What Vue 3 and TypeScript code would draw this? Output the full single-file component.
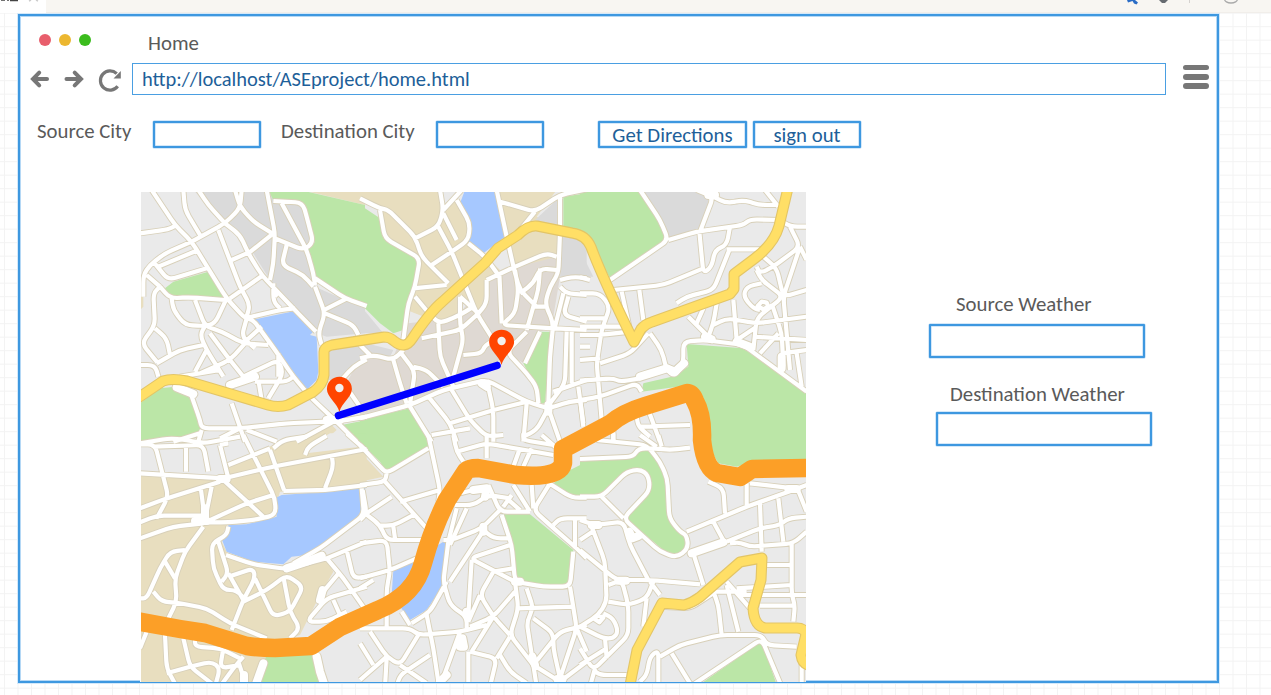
<script setup lang="ts">
interface Area { fill: string; d: string }
interface Tile { x: number; y: number; areas: Area[]; roads: string; wide?: string }

const DARK = '#dadada'
const PALE = '#eaeaea'
const SAND = '#e8debf'
const TAUPE = '#dfd9d3'
const PARK = '#bbe6a7'
const WATER = '#a6c8ff'

// Each tile is drawn in units of a third of a pixel.
const tiles: Tile[] = [
  {
    x: 140, y: 190,
    areas: [
      { fill: DARK, d: 'M160,0H385L405,30L485,35L525,155L495,185L525,290L615,330L675,345V430L560,440L530,430L390,270L340,190L255,100Z M565,480L675,450V510L640,530L600,570H565Z' },
      { fill: TAUPE, d: 'M680,515L640,540L615,590L680,650Z' },
      { fill: SAND, d: 'M485,0H675V45Z M0,250L10,260V350L0,360Z M480,760L530,715L575,705L590,720L545,760Z' },
      { fill: PARK, d: 'M385,0H480L675,45V345L615,325L525,270L520,230L500,185L525,155L500,100L490,40L400,30Z M75,295L100,275L205,245L260,325L105,318L92,328Z M0,640L60,595L105,590L150,620L180,690V730L50,755H0Z M605,705L680,690V755H650Z' },
      { fill: WATER, d: 'M335,390L465,363L525,420L510,435L530,440L535,545L530,570L500,600L405,470L385,460Z' },
    ],
    roads: 'M35,0L105,105L155,155L260,325L315,385L340,390L405,480L460,560L515,625L600,705L650,755 M0,130L85,118L105,108 M130,0L135,60L180,135 M175,0L205,45L255,100 M155,155L255,100L300,55L305,0 M285,0L300,50L340,95L400,132 M255,100L300,135L325,190L365,255L460,355L528,425 M325,190L400,130 M380,0L405,130L400,220L390,270 M405,145L490,180L520,158L500,80L488,38L400,33 M425,40L500,180L520,250L525,285 M440,165L425,225L490,255L520,290 M525,265L615,325L680,348 M552,360L615,328 M525,290L555,370L535,430L545,465 M555,370L640,405L655,435 M235,120L300,290L330,345L320,380 M275,210L325,188 M270,325L370,255 M315,385L420,360L465,355 M400,280V335L420,355 M415,305L405,320 M155,155L75,190L30,225L10,255V320 M20,255L60,290 M40,215L85,270L200,235 M55,230L175,180 M60,290L40,310L45,405L5,460L50,515 M60,290L90,325L150,322L255,330 M95,325L100,360L135,405L195,408L225,400L260,325 M165,330L195,408L245,425L310,460L385,465 M195,408L180,435L200,480L250,560 M210,430L270,510L310,560 M315,460L270,510L180,550 M320,385L305,440L345,475 M310,460L365,410 M200,480L165,545 M45,415L80,445L90,495 M50,520L120,480L190,465 M0,525H45L55,560 M310,560L415,510L430,550L385,625 M345,575L440,575L460,560 M355,570L365,630 M415,490V560 M120,560L240,540 M150,605L180,690L185,715L300,715L440,700L600,693L680,680 M275,640L315,755 M185,720L175,755 M300,715L240,745 M100,755L180,730 M320,720L410,755 M600,575L640,530L680,508 M625,600L660,650 M470,755L590,690',
    wide: 'M270,585L345,560 M560,690H600 M110,592L160,612',
  },
  {
    x: 360, y: 190,
    areas: [
      { fill: TAUPE, d: 'M145,400L230,390L300,370L370,280L460,230L590,190L600,260L575,410L530,430L490,520L460,500L340,540L250,600L150,640L0,690V510L100,500L130,430Z' },
      { fill: SAND, d: 'M0,0H240L255,40L290,15L305,50L335,110L330,155L420,240L380,280L365,345L350,370L300,320V370L230,395L140,360L165,290L180,210L75,145L60,50L0,40Z M415,0H590L530,80L600,120L590,200L455,235L430,140Z' },
      { fill: DARK, d: 'M525,90L600,20V120Z M605,120L680,160V260H600Z M0,345L70,430H0Z M0,455L100,480L85,510L0,500Z' },
      { fill: PARK, d: 'M0,45L60,85L75,145L180,205L130,420L100,430L60,400L0,340Z M610,20L680,10V140L610,110Z M530,425H572L555,640H535L530,600L490,520Z M0,690L150,655L205,740V755H0Z' },
      { fill: WATER, d: 'M315,0H410L435,140L370,190L325,155L335,110L300,40Z' },
      { fill: PALE, d: 'M440,490L530,590V630L385,570L390,535Z' },
    ],
    roads: 'M0,25L60,55L85,60L165,140L185,200L265,280 M60,60L75,145L180,205L165,290L145,340L130,450 M165,145L235,110L250,60L240,0 M250,60L305,0 M290,30L330,100L325,150L275,185L215,225 M235,110L275,185L350,370L400,450 M250,70L290,150 M325,160L375,200L415,255 M160,295L260,285 M165,320L215,380L240,400L300,375L340,350 M235,400L240,500L280,590 M185,445L300,420L350,375 M300,320V400L310,450L280,560 M300,320L355,370 M410,0L440,140L465,250L480,300L530,350 M420,35L525,65L600,15L680,-2 M525,65L480,120 M600,15V130L595,250L570,290L555,340L580,400L570,500L565,640 M380,270L465,230L560,190L590,200 M380,270V340L355,370 M418,250L425,400 M465,240L475,300L465,370L425,405L580,415L680,420 M480,310L520,280L540,235L590,240 M540,235L535,300L520,350L500,420 M520,350H555 M600,270L640,260L680,265 M600,290L620,310L680,315 M625,320L610,375L680,395 M610,310L585,410 M500,425L440,485L500,550L530,590L535,640 M540,425L495,520 M310,495L365,490L375,465L430,440 M120,485L165,545L150,640 M100,510L120,580L140,640 M0,505L40,495L100,510L130,480 M0,465L30,495 M160,530L200,540L250,590 M0,685L150,645L250,600L380,570L500,635L565,655L630,635L680,630 M150,650L215,755 M205,620L270,700L290,755 M275,600L330,690L380,740L430,735 M270,700L400,660L500,635 M215,735L330,715 M380,570L400,660V755 M500,640L490,755 M565,655L530,720L490,740 M565,655L600,755 M620,425L615,580L570,640 M635,425V580 M680,570L580,605 M655,590L670,700',
    wide: 'M365,580L380,590 M565,645V665',
  },
  {
    x: 580, y: 190,
    areas: [
      { fill: DARK, d: 'M185,0H385V60L360,120L270,145Z M0,180L40,260H0Z' },
      { fill: PARK, d: 'M0,0H180L265,150L90,265L40,170L0,130Z M320,462L490,475L680,610V755H390L360,620L330,585L185,605L190,580L275,560L325,530Z' },
    ],
    roads: 'M180,0L240,90L265,150L90,270 M0,262L30,270 M265,150L350,125L490,105L510,88L600,90 M350,0L400,20L360,125 M400,20L440,40L490,30L540,45L590,45 M555,0L595,50 M358,125L370,250L395,230L405,180L440,165L450,110 M450,175L400,300L320,320L290,340 M440,178H545 M100,300L250,285L370,235 M125,305L150,420 M178,300L190,390 M0,310H60L90,350L65,420L50,520L65,690 M0,385H80 M0,410H130 M0,435H60L150,425 M0,510L60,505 M60,520L150,490L205,430 M210,430L245,480L260,540L285,560L310,520V455L375,450L490,465L680,605 M0,572L100,565L120,575L180,565 M0,630L60,620L170,580L185,605 M0,625L10,710 M170,680L175,710L210,740 M205,660L240,755 M175,710L330,705 M325,380L385,440 M350,400L370,355 M410,340L400,400L385,440 M400,405L440,385L530,400L680,380 M460,330L470,450 M600,90L630,110H680 M630,110L660,170L580,230L540,250L530,230 M660,170L610,320L630,540 M660,170L680,210 M550,200L590,235L610,320L680,300 M530,240L545,270L610,320L530,385L520,480 M545,280L500,290L490,320L520,355L540,360 M533,348L545,335L560,338L565,350L550,358Z M575,340L605,430L610,530 M470,450L530,410 M520,440L680,450 M605,490L680,480 M650,490L665,590 M540,490L595,430 M0,470H30 M100,720V755',
    wide: 'M180,560L260,535L285,545L312,520 M375,440L395,448 M470,455L510,470 M605,500V535 M385,15H405',
  },
  {
    x: 140, y: 435,
    areas: [
      { fill: SAND, d: 'M0,110L250,130L265,90L330,60L400,30L500,0H640L680,40V155L420,170L400,240L265,265L240,310L265,360L340,390L460,400L560,375L580,410L540,480L480,600L360,640L380,670L345,755H0Z' },
      { fill: PALE, d: 'M500,55L510,30L570,-5H640L660,35Z' },
      { fill: PARK, d: 'M0,0H125L60,12L0,20Z M625,-5H680V45Z M380,660L515,655L545,755H345Z' },
      { fill: WATER, d: 'M405,190L425,180L560,170L680,155L660,180L672,235L500,360L455,365L430,388L340,380L260,350L245,312L265,295V270L320,268L410,245Z' },
    ],
    roads: 'M0,28H45L85,185L50,250 M0,25L90,10L140,15L190,25L300,5 M40,35L190,30L205,110 M138,35V110 M240,30L265,130 M0,115L250,130L400,95L680,42 M310,0L360,100L405,190L407,240L340,255L265,262H190 M240,30L265,25 M265,90L390,40 M390,45L432,165 M400,40L430,15L500,5 M495,60L505,35L560,2 M575,60L580,95L555,160 M620,-5L680,48 M430,168L555,165L680,150 M0,220L80,190L240,140 M0,262L50,242H190 M183,165L195,255L215,155 M190,265L100,275L0,310 M200,260L320,205L400,180 M250,135L370,245 M190,275L135,350L105,430L110,500L85,550 M135,345L90,350L60,400L20,490H0 M75,380L105,430 M40,470L65,500L110,503L200,520L270,565L380,610 M265,275L260,300L215,325L220,400L250,465H290L320,500 M235,320L265,415L245,440 M258,360L340,388L440,402L560,370 M265,415L310,495 M265,425L340,400L345,430L310,495L275,585 M345,430L400,545L450,530L490,455L440,420L380,465L310,500 M430,425L450,530L480,580L450,610 M665,160L672,240L540,340L460,385 M560,370L620,345L680,320 M560,370L610,430L680,530 M620,345L640,430L680,425 M680,455L560,490L500,560H560L620,530 M600,410L550,470 M580,495L600,540 M0,640L20,590 M75,600L80,700L110,755 M80,715L150,695L215,680L240,700L225,755 M130,610L150,695L215,745 M165,610V635L240,640L300,670 M250,640L240,700L300,690 M310,665L280,700L240,755 M295,680L320,755',
    wide: 'M165,258H200 M195,220V255 M240,132H260 M548,465L540,495 M440,400L500,380L545,362 M370,685L345,755 M530,665L540,710L555,755 M312,720V755',
  },
  {
    x: 360, y: 435,
    areas: [
      { fill: SAND, d: 'M0,50L70,125L0,140Z' },
      { fill: PARK, d: 'M0,0H205L208,35L80,112L60,80L0,20Z M428,238H510L640,345L628,445L560,452L500,445L468,420L455,320Z M575,150L620,110L680,80V180L635,182Z' },
      { fill: WATER, d: 'M0,155L15,160V235L0,245Z M100,405L170,370L250,320L262,325L245,430L250,450L200,525L150,555L95,480Z' },
    ],
    roads: 'M0,30L60,95L80,115L205,40 M205,0L240,165L235,200 M80,115L75,140L0,150 M75,140L200,280 M15,235L60,270L80,315L200,315 M20,235L95,185 M120,200L240,165 M55,272H100L160,240 M100,275L105,310 M0,325L80,315L90,410L80,460V580 M0,430L90,405L170,370 M0,460L40,435 M8,165L20,235L0,255 M280,0L290,50L310,80 M290,50L380,25L580,60 M380,0V70 M460,95L480,40 M490,95L515,40 M490,-5V15L580,30 M545,0L585,35 M300,175L340,165 M285,210H340L385,180L450,190 M290,220L265,320 M320,220L270,330 M250,315H275L365,280L420,225 M375,280L270,440 M370,285L400,310L445,310 M385,150L420,230H510 M460,150L510,230 M455,180L430,215 M440,190L480,225 M515,150L520,220 M570,145L520,225L570,270L650,340L680,370 M580,270L600,250H680 M645,250V340 M560,140L635,188H680 M425,240L455,330L465,440L550,455H630L640,350 M630,455L650,580L600,730 M465,440L330,370L450,330 M335,375L325,540 M265,320L250,440L270,510L320,545L320,580 M400,410L360,480L400,545L450,600 M400,410L460,400 M325,560L360,480 M330,575L400,545L465,470 M465,440L475,520L450,600L520,690 M475,520L640,515 M500,460L520,520L500,560L520,690L600,590L680,570 M520,550L580,595V640L600,730 M650,580L680,650 M0,580H150L175,600L300,590L380,570 M125,530L150,570 M260,440L210,530L155,565 M200,540L220,640L235,740 M300,590L240,755 M175,600L120,690L80,665L30,590 M80,665L0,735 M0,625L40,690 M80,670L75,755 M120,690L200,745 M210,660L120,720L110,755 M325,650V755 M330,650L410,670L390,755 M400,545L335,650 M410,670L450,605 M420,660L450,710L500,745 M520,690L530,755 M520,690L600,740L680,680',
    wide: 'M340,165L380,160L375,185 M305,610L300,635H312L307,610 M517,665L525,690 M240,740L260,720 M320,530V540 M592,732H608 M370,275V290 M465,440H480',
  },
  {
    x: 580, y: 435,
    areas: [
      { fill: PARK, d: 'M0,80L165,65L175,42H210L240,80L260,110L265,250L315,300V340L290,360L250,345L135,248L210,170L205,125L190,103H150L60,182H0Z M390,0H680V75H540L470,95L415,85L395,50Z M350,755L545,618L592,755Z' },
    ],
    roads: 'M0,72L160,65L175,40H225L270,45L330,38 M50,15L200,30L240,80L262,130L268,250L300,290L320,300L325,340L290,368L240,350L130,250L210,165L205,120L180,103L140,110L65,185H0 M65,185L130,250 M180,0L230,35 M235,0L245,35 M100,-5V20 M0,255L45,270L130,260L150,330L205,435 M35,275L75,380L80,500L55,540L0,575 M0,345L110,435H210L360,448 M0,315L45,285 M85,450L125,435L145,510V600L40,705L0,640 M85,500L145,510L200,490L220,440 M210,440L240,480 M200,490L190,575 M70,535L100,550L115,590L100,610H70L0,575 M40,550L55,542L70,548L58,562Z M75,610L80,670 M0,690L80,640 M40,705L60,720H140 M30,755L45,700 M180,740L200,720L210,665L235,645V755 M320,290L500,215L640,165L680,150 M385,140L430,160L435,235 M500,145V210 M510,145L640,160 M400,260L435,325 M440,320L540,280L600,270L625,250L680,245 M450,325L480,322L510,335L640,325L680,290 M540,205L545,350 M595,190L610,320 M650,155L680,230 M635,320V480L645,510L640,560 M560,390H635 M470,460L635,450 M400,470H500 M480,480H680 M540,512H640 M340,355L370,450 M400,470L415,510L425,600 M440,450L475,590 M440,440L510,520 M240,665L300,630L420,600H545L560,630L650,635 M275,655L330,745 M330,755L545,612L605,755 M665,640V755 M245,515L330,520L400,475',
    wide: 'M335,355L430,322 M148,290L157,310L175,303 M35,270H55 M625,162H650 M115,437H138',
  },
]

// Rounds every interior corner of a path made of M, L, H, V and Z commands.
function smooth(path: string, radius = 22): string {
  return path.split('M').filter(s => s.trim()).map((sub) => {
    const pts: number[][] = []
    if (sub.includes('Z')) return 'M' + sub
    for (const m of ('L' + sub).matchAll(/([LHV])([^LHV]*)/g)) {
      const n = m[2].split(',').map(Number)
      const last = pts[pts.length - 1]
      pts.push(m[1] === 'L' ? n : m[1] === 'H' ? [n[0], last[1]] : [last[0], n[0]])
    }
    let out = `M${pts[0]}`
    for (let i = 1; i < pts.length - 1; i++) {
      const [a, b, c] = [pts[i - 1], pts[i], pts[i + 1]]
      const toward = (p: number[]) => {
        const len = Math.hypot(p[0] - b[0], p[1] - b[1])
        const k = Math.min(radius / len, 0.5)
        return [b[0] + (p[0] - b[0]) * k, b[1] + (p[1] - b[1]) * k]
      }
      out += `L${toward(a)}Q${b} ${toward(c)}`
    }
    return out + `L${pts[pts.length - 1]}`
  }).join('')
}
const roadTiles = tiles.map(t => ({ ...t, roads: smooth(t.roads) }))

const yellowRoads = [
  'M135,400L163,381Q172,378 187,381L268,405Q278,408 288,405L313,392Q323,385 324,375V352Q324,347 332,345L384,337Q390,337 394,341Q405,350 412,339Q430,312 442,302L485,263L498,248L518,235Q528,225 537,226L572,233Q586,235 591,247Q602,277 634,342L641,329Q645,324 652,322L730,294L734,289V274L754,259Q774,244 779,226L788,188',
  'M630,685L637,650L662,603L684,605Q692,603 700,597L740,562L762,558L761,580L753,608Q754,626 765,628H797Q804,628 806,634L801,655Q802,663 808,665',
]
const highway =
  'M136,621L180,629L205,633L247,646Q260,648 275,648L311,646L340,627L378,610Q415,595 423,563Q432,530 447,500L466,471Q469,468 478,468L516,475Q560,479 563,463V449L610,424Q622,413 645,406L687,393Q692,393 695,401Q703,415 702,440Q705,468 717,473L740,477L752,469L812,468'

const pins = [
  { x: 339.4, y: 389 },
  { x: 501.6, y: 342 },
]
</script>

<template>
  <div class="canvas">
    <header class="toolbar">
      <svg class="tab" width="47" height="14" viewBox="0 0 47 14">
        <path d="M0 0H46V13H0Z" fill="#fff" />
        <path d="M1 0H5M7 0H9M10 .5H18" stroke="#444" stroke-width="1.6" />
        <path d="M29 1L31 0M36 0L38 1" stroke="#ccc" stroke-width="1.4" />
      </svg>
      <svg class="tools" width="150" height="13" viewBox="0 0 150 13">
        <path d="M5 0H13L16 2.500L14.500 4.500L12 3.500L10.500 1L6 2.500Z" fill="#2b6dc6" />
        <path d="M37 0H46L43 3H40Z" fill="#666b70" />
        <path d="M67.500 0V3" stroke="#d5d2cf" />
        <path d="M102.500 -1A6.500 4 0 0 0 115.500 -1" fill="none" stroke="#aaa" stroke-width="1.3" />
      </svg>
    </header>

    <main class="window">
      <div class="title-row">
        <div class="dots"><i class="red" /><i class="amber" /><i class="green" /></div>
        <span class="text">Home</span>
      </div>

      <div class="nav-row">
        <svg class="nav" width="94" height="34" viewBox="0 0 94 34">
          <g fill="none" stroke="#777" stroke-width="4" stroke-linecap="round">
            <path d="M14 17H27" /><path d="M19.200 10.700L13 17L19.200 23.300" stroke-linejoin="miter" />
            <path d="M46.500 17H59" /><path d="M54.700 10.700L61 17L54.700 23.300" stroke-linejoin="miter" />
            <path d="M97.700 24.300A9.600 9.600 0 1 1 96.700 11.600" stroke-width="3.200" stroke-linecap="butt" />
          </g>
          <path d="M100.800 9V16.500H93.500Z" fill="#777" />
        </svg>
        <div class="url">http://localhost/ASEproject/home.html</div>
        <div class="menu"><i /><i /><i /></div>
      </div>

      <div class="form-row">
        <span class="text source">Source City</span>
        <div class="box small" />
        <span class="text destination">Destination City</span>
        <div class="box small second" />
        <button class="box directions">Get Directions</button>
        <button class="box sign-out">sign out</button>
      </div>

      <div class="content">
        <svg class="map" width="666" height="490" viewBox="140 192 666 490">
          <rect x="141" y="192" width="665" height="490" :fill="PALE" />
          <g v-for="t in roadTiles" :key="'a' + t.x + t.y" :transform="`translate(${t.x} ${t.y}) scale(.33333)`">
            <path v-for="(a, i) in t.areas" :key="i" :d="a.d" :fill="a.fill" />
          </g>
          <g class="casing">
            <g v-for="t in roadTiles" :key="'c' + t.x + t.y" :transform="`translate(${t.x} ${t.y}) scale(.33333)`">
              <path :d="t.roads" /><path class="wide" :d="t.wide" />
            </g>
          </g>
          <g class="surface">
            <g v-for="t in roadTiles" :key="'s' + t.x + t.y" :transform="`translate(${t.x} ${t.y}) scale(.33333)`">
              <path :d="t.roads" /><path class="wide" :d="t.wide" />
            </g>
          </g>
          <g class="main-roads">
            <path v-for="(d, i) in yellowRoads" :key="'e' + i" :d="d" stroke="#e3c566" stroke-width="11" />
            <path v-for="(d, i) in yellowRoads" :key="'y' + i" :d="d" stroke="#ffdf66" stroke-width="8.800" />
            <path :d="highway" stroke="#fc9f27" stroke-width="18.500" />
            <path d="M338.500 415.500L497 365.500" stroke="#00f" stroke-width="7.600" stroke-linecap="round" />
          </g>
          <g v-for="p in pins" :key="p.x" :transform="`translate(${p.x} ${p.y})`">
            <path d="M0 23C-2 14-12.500 8-12.500 0A12.500 12.200 0 0 1 12.500 0C12.500 8 2 14 0 23Z" fill="#ff4500" />
            <circle cx="0" cy="-1" r="4.200" fill="#f2f0ee" />
          </g>
          <rect x="140" y="192" width="1" height="490" fill="#fff" />
        </svg>

        <aside class="weather">
          <span class="text source-label">Source Weather</span>
          <div class="box large" />
          <span class="text destination-label">Destination Weather</span>
          <div class="box large shifted" />
        </aside>
      </div>
    </main>
  </div>
</template>

<style>
body { overflow: hidden; }
</style>

<style scoped>
* { box-sizing: border-box; }
.canvas {
  width: 1271px;
  height: 695px;
  overflow: hidden;
  background-color: #fff;
  background-image:
    linear-gradient(to right, #f3f3f3 1px, transparent 1px),
    linear-gradient(to bottom, #f3f3f3 1px, transparent 1px);
  background-size: 13.5px 13.5px;
  background-position: 4px 12.700px;
  font-family: Carlito, Lato, sans-serif;
  font-size: 20.800px;
  line-height: 24px;
  color: #5a5a5a;
}
.toolbar {
  height: 13px;
  display: flex;
  justify-content: space-between;
  background: #f8f6f2;
  border-bottom: 1px solid #f1eeea;
}
.tools { margin-right: -1px; }
.window {
  width: 1201px;
  height: 669px;
  margin: 1px 0 0 18px;
  border: 2px solid #3e98e0;
  box-shadow: 0 0 0 1px #d4e9fa, inset 0 0 0 1px #b5d8f5;
  background: #fff;
  display: flex;
  flex-direction: column;
}
.title-row {
  height: 47px;
  flex: none;
  display: flex;
  align-items: flex-start;
  padding: 15px 0 0 18.500px;
}
.dots { display: flex; gap: 8.200px; width: 109.500px; padding-top: 2.500px; }
.dots i { width: 12px; height: 12px; border-radius: 50%; }
.red { background: #e85e6c; }
.amber { background: #ecb730; }
.green { background: #3bbc1d; }
.text { white-space: nowrap; }
.nav-row { display: flex; height: 32px; flex: none; }
.nav { overflow: visible; transform: translateY(-1px); }
.url {
  width: 1034px;
  margin-left: 18px;
  height: 32px;
  border: 1px solid #4a9fe2;
  padding: 3px 9px;
  font-size: 20.500px;
  color: #1e5f99;
}
.menu { display: flex; flex-direction: column; gap: 3.700px; margin: 1.500px 0 0 17px; }
.menu i { width: 26px; height: 5.800px; border-radius: 3px; background: #777; }
.form-row { display: flex; height: 28px; margin-top: 26px; padding-left: 17px; flex: none; align-items: flex-start; }
.form-row .text { margin-top: -2px; }
.source { width: 116px; }
.destination { width: 155px; margin-left: 20px; }
.box {
  flex: none;
  border: 2px solid #3e98e0;
  border-radius: 1px;
  box-shadow: 0 0 0 .5px #a9d1f3, inset 0 0 0 .5px #a9d1f3;
  background: #fff;
  font: inherit;
  color: #1e5f99;
  padding: 0;
  text-align: center;
}
.small, .sign-out { width: 108px; height: 27px; }
.directions { width: 149px; height: 27px; margin-left: 54px; }
.sign-out { margin-left: 6px; }
.form-row button { line-height: 24px; white-space: nowrap; }
.content { display: flex; height: 489px; flex: none; align-items: flex-start; margin-top: 43px; margin-left: 120px; }
.map { flex: none; height: 490px; }
.main-roads path { fill: none; stroke-linejoin: round; }
.casing path, .surface path { fill: none; stroke-linejoin: round; stroke-linecap: butt; }
.casing path { stroke: #d8d0b9; stroke-width: 18px; }
.surface path { stroke: #fff; stroke-width: 12.500px; }
.casing .wide { stroke-width: 30px; stroke-linecap: round; }
.surface .wide { stroke-width: 24px; stroke-linecap: round; }
.weather { display: flex; flex-direction: column; margin-left: 123px; padding-top: 100px; align-items: flex-start; }
.source-label { margin-left: 27px; }
.destination-label { margin-left: 21px; margin-top: 24px; }
.large { width: 216px; height: 34px; margin-top: 8px; }
.shifted { margin-left: 7px; margin-top: 6px; }
</style>
